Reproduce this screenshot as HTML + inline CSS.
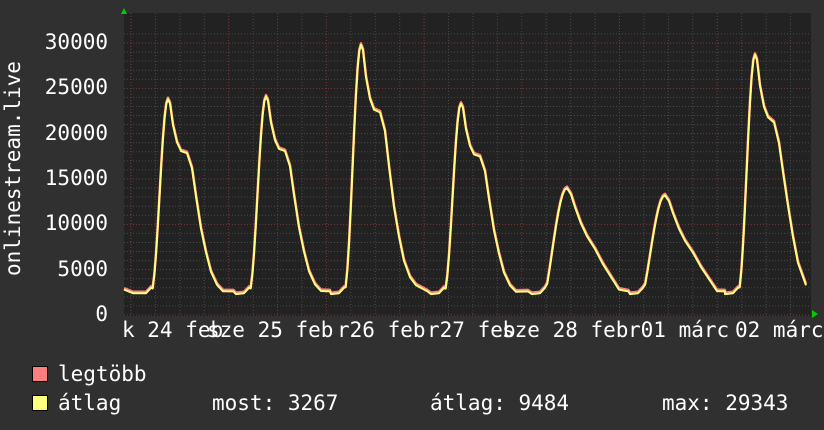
<!DOCTYPE html>
<html><head><meta charset="utf-8"><style>
body{margin:0;background:#303030;width:824px;height:430px;overflow:hidden;position:relative;font-family:"DejaVu Sans Mono","Liberation Mono",monospace;color:#fff}
.t{position:absolute;font-size:21px;line-height:21px;white-space:pre;color:#fff}
.sq{position:absolute;width:14px;height:14px;border:1px solid #000}
</style></head><body>
<svg width="824" height="430" style="position:absolute;left:0;top:0" id="g">
<rect x="124" y="13" width="687" height="303" fill="#222"/>
<g id="grid"></g>
<polyline id="mx" fill="none" stroke="#ff7f7f" stroke-width="2.5" stroke-linejoin="round"/>
<polyline id="av" fill="none" stroke="#ffff7f" stroke-width="2" stroke-linejoin="round"/>
<polygon points="121,14 127,14 124,8" fill="#0c0"/>
<polygon points="812,310 812,318 818,314" fill="#0c0"/>
</svg>
<div class="t" style="right:716px;top:32px">30000</div>
<div class="t" style="right:716px;top:77px">25000</div>
<div class="t" style="right:716px;top:123px">20000</div>
<div class="t" style="right:716px;top:168px">15000</div>
<div class="t" style="right:716px;top:213px">10000</div>
<div class="t" style="right:716px;top:259px">5000</div>
<div class="t" style="right:716px;top:304px">0</div>
<div class="t" style="left:3px;top:276px;transform-origin:0 0;transform:rotate(-90deg)">onlinestream.live</div>
<div class="t" style="left:122px;top:320px">k 24 feb</div>
<div class="t" style="left:207px;top:320px">sze 25 feb</div>
<div class="t" style="left:337px;top:320px">r26 feb</div>
<div class="t" style="left:427px;top:320px">r27 feb</div>
<div class="t" style="left:502px;top:320px">sze 28 feb</div>
<div class="t" style="left:628px;top:320px">r01 márc</div>
<div class="t" style="left:735px;top:320px">02 márc</div>
<div class="sq" style="left:32px;top:366px;background:#ff7f7f"></div>
<div class="sq" style="left:32px;top:395px;background:#ffff7f"></div>
<div class="t" style="left:58px;top:364px">legtöbb</div>
<div class="t" style="left:58px;top:393px">átlag</div>
<div class="t" style="left:212px;top:393px">most: 3267</div>
<div class="t" style="left:430px;top:393px">átlag: 9484</div>
<div class="t" style="left:662px;top:393px">max: 29343</div>
<script>
var ns="http://www.w3.org/2000/svg",g=document.getElementById('grid');
function ln(x1,y1,x2,y2,c){var l=document.createElementNS(ns,'line');l.setAttribute('x1',x1);l.setAttribute('y1',y1);l.setAttribute('x2',x2);l.setAttribute('y2',y2);l.setAttribute('stroke',c);l.setAttribute('stroke-dasharray','1,2');g.appendChild(l);}
function Y(v){return 315-v*272/30000;}
for(var v=0;v<=31000;v+=1000){ln(124,Y(v),811,Y(v),v%5000==0?'#7a3a3a':'#4a4a4a');}
var D=97.7;
for(var x=131;x<812;x+=D/4){var k=Math.round((x-131)/(D/4));ln(x,13,x,316,k%4==0?'#7a3a3a':'#4a4a4a');}
var peaks=[[168,23800],[266,24100],[361,29800],[461,23300],[567,14000],[665,13200],[755,28700]];
var pts=[];
function add(x,v){pts.push([x,v]);}
add(124,2800);add(133,2400);
for(var i=0;i<peaks.length;i++){
 var px=peaks[i][0],P=peaks[i][1],low=P<15000;
 var rs=low?22:17;
 add(px-rs-5,2400);add(px-rs,3000);
 for(var t=1;t<=10;t++){var f=t/10;add(px-rs+rs*f,2400+(P-2400)*Math.pow(Math.sin(f*Math.PI/2),low?1.3:2));}
 var drop=low?[[4,.95],[8,.85],[14,.72],[20,.62],[28,.52],[36,.4],[44,.3],[52,.2]]:[[2,.98],[5,.88],[9,.8],[13,.76],[19,.75],[24,.68],[28,.55],[33,.4],[38,.29],[43,.2],[49,.14],[55,.11]];
 if(i==6)drop=[[2,.98],[5,.88],[9,.8],[13,.76],[19,.74],[24,.66],[28,.55],[33,.42],[38,.3],[43,.2],[51,.114]];
 for(var j=0;j<drop.length;j++){add(px+drop[j][0],P*drop[j][1]);}
 if(i<6){var nx=peaks[i+1][0]-(peaks[i+1][1]<15000?22:17)-5;add((px+drop[drop.length-1][0]+nx)/2,2600);add(nx-8,2300);}
}
pts.sort(function(a,b){return a[0]-b[0]});
var s1=pts.map(function(p){return p[0]+','+(Y(p[1])-1.5)}).join(' ');
var s2=pts.map(function(p){return p[0]+','+Y(p[1])}).join(' ');
document.getElementById('mx').setAttribute('points',s1);
document.getElementById('av').setAttribute('points',s2);
</script>
</body></html>
